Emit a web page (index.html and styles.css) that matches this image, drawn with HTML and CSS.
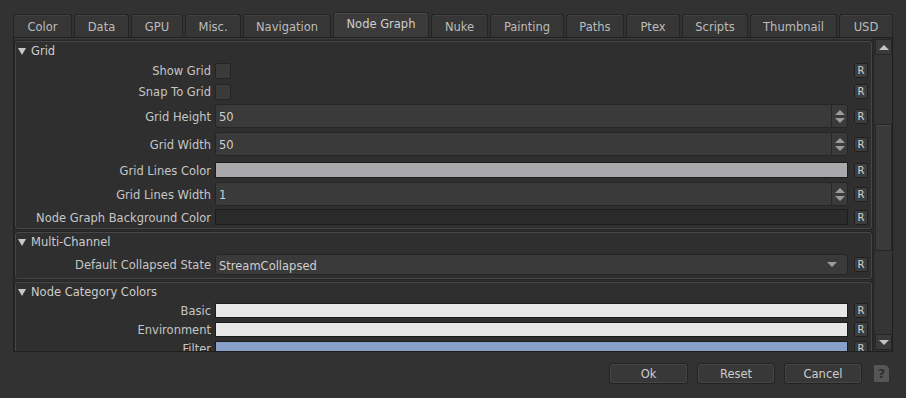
FILE: index.html
```html
<!DOCTYPE html>
<html lang="en">
<head>
    <meta charset="UTF-8">
    <title>Preferences</title>
    <link rel="stylesheet" href="styles.css">
</head>
<body>
    <div class="dialog">
        <div class="tabs">
            <div class="tab">Color</div>
            <div class="tab">Data</div>
            <div class="tab">GPU</div>
            <div class="tab">Misc.</div>
            <div class="tab">Navigation</div>
            <div class="tab active">Node Graph</div>
            <div class="tab">Nuke</div>
            <div class="tab">Painting</div>
            <div class="tab">Paths</div>
            <div class="tab">Ptex</div>
            <div class="tab">Scripts</div>
            <div class="tab">Thumbnail</div>
            <div class="tab">USD</div>
        </div>

        <div class="pane">
            <div class="scroll">
                <div class="group">
                    <div class="group-head"><span class="arrow"></span>Grid</div>
                    <div class="row h21">
                        <div class="label">Show Grid</div>
                        <div class="field"><div class="check"></div></div>
                        <div class="reset">R</div>
                    </div>
                    <div class="row h21">
                        <div class="label">Snap To Grid</div>
                        <div class="field"><div class="check"></div></div>
                        <div class="reset">R</div>
                    </div>
                    <div class="row h28">
                        <div class="label">Grid Height</div>
                        <div class="field">
                            <div class="number"><span class="value">50</span><div class="spin"><i class="up"></i><i class="down"></i></div></div>
                        </div>
                        <div class="reset">R</div>
                    </div>
                    <div class="row h28">
                        <div class="label">Grid Width</div>
                        <div class="field">
                            <div class="number"><span class="value">50</span><div class="spin"><i class="up"></i><i class="down"></i></div></div>
                        </div>
                        <div class="reset">R</div>
                    </div>
                    <div class="row h24">
                        <div class="label">Grid Lines Color</div>
                        <div class="field"><div class="swatch grey"></div></div>
                        <div class="reset">R</div>
                    </div>
                    <div class="row h24">
                        <div class="label">Grid Lines Width</div>
                        <div class="field">
                            <div class="number"><span class="value">1</span><div class="spin"><i class="up"></i><i class="down"></i></div></div>
                        </div>
                        <div class="reset">R</div>
                    </div>
                    <div class="row h22">
                        <div class="label">Node Graph Background Color</div>
                        <div class="field"><div class="swatch dark"></div></div>
                        <div class="reset">R</div>
                    </div>
                </div>

                <div class="group">
                    <div class="group-head"><span class="arrow"></span>Multi-Channel</div>
                    <div class="row h27">
                        <div class="label">Default Collapsed State</div>
                        <div class="field">
                            <div class="combo"><span class="value">StreamCollapsed</span><i class="drop"></i></div>
                        </div>
                        <div class="reset">R</div>
                    </div>
                </div>

                <div class="group">
                    <div class="group-head"><span class="arrow"></span>Node Category Colors</div>
                    <div class="row h19">
                        <div class="label">Basic</div>
                        <div class="field"><div class="swatch small white"></div></div>
                        <div class="reset">R</div>
                    </div>
                    <div class="row h19">
                        <div class="label">Environment</div>
                        <div class="field"><div class="swatch small white"></div></div>
                        <div class="reset">R</div>
                    </div>
                    <div class="row h19">
                        <div class="label">Filter</div>
                        <div class="field"><div class="swatch small blue"></div></div>
                        <div class="reset">R</div>
                    </div>
                </div>
            </div>

            <div class="scrollbar">
                <div class="sb-btn"><i class="sb-up"></i></div>
                <div class="track"><div class="handle"></div></div>
                <div class="sb-btn"><i class="sb-down"></i></div>
            </div>
        </div>

        <div class="footer">
            <button class="btn">Ok</button>
            <button class="btn">Reset</button>
            <button class="btn">Cancel</button>
            <div class="help">?</div>
        </div>
    </div>
</body>
</html>
```

FILE: styles.css
```css
body {
    margin: 0;
    background-color: #323232;
    font-family: "DejaVu Sans", Verdana, sans-serif;
    font-size: 11.5px;
    color: #c6c6c6;
}

.dialog {
    width: 906px;
    height: 398px;
    display: flex;
    flex-direction: column;
}

/* tab bar */
.tabs {
    display: flex;
    align-items: flex-end;
    gap: 2px;
    height: 25px;
    padding: 12px 13px 0;
}

.tab {
    box-sizing: border-box;
    height: 23px;
    padding: 1px 0 0;
    flex: 0 0 auto;
    display: flex;
    align-items: center;
    justify-content: center;
    white-space: nowrap;
    background-color: #363636;
    border: 1px solid #252525;
    border-bottom: none;
    border-radius: 3px 3px 0 0;
    box-shadow: inset 0 1px 0 #424242;
    color: #bcbcbc;
}

.tab:nth-child(1) { width: 59px; }
.tab:nth-child(2) { width: 55px; }
.tab:nth-child(3) { width: 52px; }
.tab:nth-child(4) { width: 56px; }
.tab:nth-child(5) { width: 88px; }
.tab:nth-child(6) { width: 96px; }
.tab:nth-child(7) { width: 57px; }
.tab:nth-child(8) { width: 74px; }
.tab:nth-child(9) { width: 58px; }
.tab:nth-child(10) { width: 54px; }
.tab:nth-child(11) { width: 66px; }
.tab:nth-child(12) { width: 87px; }
.tab:nth-child(13) { width: 54px; }

.tab.active {
    height: 25px;
    padding-top: 0;
    padding-bottom: 2px;
    background-color: #3b3b3b;
    color: #cfcfcf;
    box-shadow: inset 0 1px 0 #4a4a4a;
}

/* main pane */
.pane {
    box-sizing: border-box;
    height: 315px;
    margin: 0 13px;
    display: flex;
    background-color: #2e2e2e;
    border: 1px solid #1f1f1f;
    box-shadow: inset 0 1px 0 #3c3c3c;
}

.scroll {
    flex: 1;
    overflow: hidden;
    padding: 3px 1px 0 1px;
}

.group {
    border: 1px solid #464646;
    border-radius: 3px;
    box-shadow: 0 0 0 1px #262626;
    margin-bottom: 3px;
    background-color: #2f2f2f;
}

.group + .group {
    margin-top: 1px;
}

.group-head {
    height: 18px;
    display: flex;
    align-items: center;
    padding-left: 2px;
    color: #cdcdcd;
}

.arrow {
    width: 0;
    height: 0;
    border-left: 4px solid transparent;
    border-right: 4px solid transparent;
    border-top: 7px solid #c8c8c8;
    margin-right: 5px;
}

.row {
    display: flex;
    align-items: center;
    gap: 4px;
    padding-right: 3px;
}

.h19 { height: 19px; }
.h21 { height: 21px; }
.h22 { height: 22px; }
.h24 { height: 24px; }
.h27 { height: 27px; }
.h28 { height: 28px; }

.label {
    width: 195px;
    padding-top: 1px;
    text-align: right;
    white-space: nowrap;
}

.field {
    flex: 1;
    display: flex;
    margin-right: 2px;
}

.check {
    width: 14px;
    height: 14px;
    background-color: #3a3a3a;
    border: 1px solid #242424;
    border-radius: 2px;
}

.number,
.combo {
    flex: 1;
    box-sizing: border-box;
    display: flex;
    align-items: center;
    background-color: #3a3a3a;
    border: 1px solid #252525;
    border-radius: 3px;
}

.number {
    height: 24px;
}

.combo {
    height: 21px;
}

.value {
    flex: 1;
    padding-left: 3px;
    padding-top: 2px;
    color: #cfcfcf;
}

.spin {
    width: 15px;
    height: 100%;
    border-left: 1px solid #262626;
    display: flex;
    flex-direction: column;
    justify-content: center;
    align-items: center;
    gap: 3px;
}

.up,
.sb-up {
    width: 0;
    height: 0;
    border-left: 5px solid transparent;
    border-right: 5px solid transparent;
    border-bottom: 5px solid #9b9b9b;
}

.down,
.drop,
.sb-down {
    width: 0;
    height: 0;
    border-left: 5px solid transparent;
    border-right: 5px solid transparent;
    border-top: 5px solid #9b9b9b;
}

.drop {
    margin-right: 10px;
}

.swatch {
    flex: 1;
    height: 14px;
    border: 1px solid #1c1c1c;
}

.swatch.small {
    height: 13px;
}

.grey { background-color: #a9a9ac; }
.dark { background-color: #2b2b2b; }
.white { background-color: #e8e8e8; }
.blue { background-color: #89a0c9; }

.reset {
    box-sizing: border-box;
    width: 14px;
    height: 15px;
    background-color: #3d3d3d;
    border: 1px solid #202020;
    border-radius: 2px;
    font-size: 10px;
    line-height: 13px;
    text-align: center;
    color: #d2d2d2;
}

/* scrollbar */
.scrollbar {
    width: 17px;
    display: flex;
    flex-direction: column;
    padding: 1px 0 1px 1px;
    border-left: 1px solid #262626;
    background-color: #303030;
}

.sb-btn {
    box-sizing: border-box;
    height: 16px;
    display: flex;
    align-items: center;
    justify-content: center;
    background-color: #3a3a3a;
    border: 1px solid #262626;
}

.sb-up,
.sb-down {
    border-bottom-color: #c4c4c4;
    border-top-color: #c4c4c4;
}

.track {
    flex: 1;
    background-color: #353535;
}

.handle {
    box-sizing: border-box;
    height: 127px;
    margin-top: 69px;
    background-color: #3a3a3a;
    border: 1px solid #262626;
    box-shadow: inset 0 1px 0 #4a4a4a;
}

/* footer */
.footer {
    display: flex;
    align-items: center;
    justify-content: flex-end;
    gap: 9px;
    padding: 11px 17px 0 0;
}

.btn {
    width: 78px;
    height: 21px;
    padding: 0;
    font-family: inherit;
    font-size: 11.5px;
    color: #cdcdcd;
    background-color: #383838;
    border: 1px solid #232323;
    border-radius: 3px;
    box-shadow: inset 0 0 0 1px #454545;
}

.btn:first-child {
    width: 79px;
}

.help {
    width: 15px;
    height: 17px;
    margin-left: 3px;
    background-color: #565656;
    border-radius: 1px 5px 1px 1px;
    color: #2f2f2f;
    font-weight: bold;
    font-size: 13px;
    line-height: 17px;
    text-align: center;
}
```
